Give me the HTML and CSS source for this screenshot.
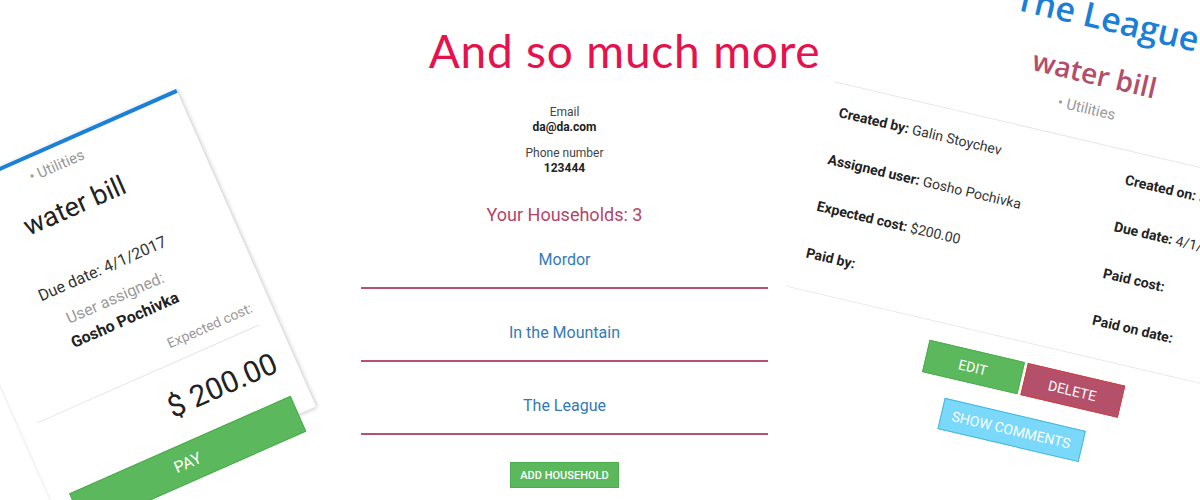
FILE: index.html
```html
<!DOCTYPE html>
<html lang="en">
<head>
<meta charset="utf-8">
<title>And so much more</title>
<link rel="stylesheet" href="styles.css">
</head>
<body>
<div class="page">
  <div class="col-left">
    <div class="bill-card">
      <div class="bc-cat">• Utilities</div>
      <div class="bc-title">water bill</div>
      <div class="bc-due">Due date: 4/1/2017</div>
      <div class="bc-label">User assigned:</div>
      <div class="bc-user">Gosho Pochivka</div>
      <div class="bc-exp">Expected cost:</div>
      <div class="bc-divider"></div>
      <div class="bc-amount">$ 200.00</div>
      <button class="bc-pay">PAY</button>
    </div>
  </div>

  <div class="col-center">
    <h1 class="headline">And so much more</h1>
    <div class="profile">
      <div class="field">
        <div class="f-label">Email</div>
        <div class="f-value">da@da.com</div>
      </div>
      <div class="field">
        <div class="f-label">Phone number</div>
        <div class="f-value">123444</div>
      </div>
    </div>
    <h2 class="hh-title">Your Households: 3</h2>
    <ul class="hh-list">
      <li class="hh-item"><a class="hh-link" href="#">Mordor</a></li>
      <li class="hh-item"><a class="hh-link" href="#">In the Mountain</a></li>
      <li class="hh-item"><a class="hh-link" href="#">The League</a></li>
    </ul>
    <button class="btn-add">ADD HOUSEHOLD</button>
  </div>

  <div class="col-right">
    <div class="bill-detail">
      <div class="bd-household">The League</div>
      <div class="bd-title">water bill</div>
      <div class="bd-cat">• Utilities</div>
      <div class="bd-rule"></div>
      <div class="bd-grid">
        <div class="bd-row"><b>Created by:</b> Galin Stoychev</div>
        <div class="bd-row"><b>Created on:</b> 3/28/2017</div>
        <div class="bd-row"><b>Assigned user:</b> Gosho Pochivka</div>
        <div class="bd-row"><b>Due date:</b> 4/1/2017</div>
        <div class="bd-row"><b>Expected cost:</b> $200.00</div>
        <div class="bd-row"><b>Paid cost:</b></div>
        <div class="bd-row"><b>Paid by:</b></div>
        <div class="bd-row"><b>Paid on date:</b></div>
      </div>
      <div class="bd-rule bd-rule-bottom"></div>
      <div class="bd-actions">
        <button class="bd-btn bd-edit">EDIT</button>
        <button class="bd-btn bd-delete">DELETE</button>
      </div>
      <div class="bd-actions bd-actions-second">
        <button class="bd-btn bd-comments">SHOW COMMENTS</button>
      </div>
    </div>
  </div>
</div>
</body>
</html>
```

FILE: styles.css
```css
html, body {
  margin: 0;
  padding: 0;
  background: #ffffff;
  overflow: hidden;
}

body {
  font-family: Roboto, "Liberation Sans", Arial, sans-serif;
  color: #333333;
}

.page {
  width: 1200px;
  height: 500px;
  overflow: hidden;
  display: grid;
  grid-template-columns: 361px 407px 1fr;
  align-items: start;
}

button {
  font-family: Roboto, "Liberation Sans", Arial, sans-serif;
  cursor: pointer;
  padding: 0;
  margin: 0;
}

/* ---------- left rotated bill card ---------- */
.col-left {
  min-width: 0;
}

.bill-card {
  box-sizing: border-box;
  width: 280px;
  height: 347px;
  margin-left: -104px;
  margin-top: 89px;
  padding: 8px 19px 0;
  background: #ffffff;
  border-top: 4px solid #1b80d8;
  box-shadow: 1px 1px 4px rgba(0, 0, 0, 0.22);
  transform-origin: 100% 0;
  transform: rotate(-23.8deg);
  display: flex;
  flex-direction: column;
}

.bc-cat {
  font-size: 15px;
  line-height: 20px;
  color: #999999;
  text-align: center;
}

.bc-title {
  margin-top: 18px;
  font-size: 27px;
  line-height: 32px;
  color: #222222;
  text-align: center;
}

.bc-due {
  margin-top: 42px;
  font-size: 16px;
  line-height: 22px;
  color: #333333;
  text-align: center;
}

.bc-label {
  margin-top: 10px;
  font-size: 16px;
  line-height: 22px;
  color: #9a9a9a;
  text-align: center;
}

.bc-user {
  margin-top: 2px;
  font-size: 16px;
  line-height: 22px;
  font-weight: 700;
  color: #222222;
  text-align: center;
}

.bc-exp {
  margin-top: 18px;
  font-size: 14px;
  line-height: 20px;
  color: #9a9a9a;
  text-align: right;
}

.bc-divider {
  margin-top: 9px;
  border-top: 1px solid #e6e6e6;
}

.bc-amount {
  margin-top: 22px;
  font-size: 30px;
  line-height: 36px;
  color: #222222;
  text-align: right;
}

.bc-pay {
  flex: none;
  margin-top: 19px;
  height: 39px;
  border: 1px solid #4cae4c;
  background: #5cb85c;
  color: #ffffff;
  font-size: 16px;
}

/* ---------- center column ---------- */
.col-center {
  display: flex;
  flex-direction: column;
  align-items: stretch;
}

.headline {
  margin: 24px -120px 0 0;
  font-family: Lato, "Open Sans", sans-serif;
  font-weight: 400;
  font-size: 46px;
  line-height: 54px;
  letter-spacing: 0.8px;
  color: #e5124d;
  text-align: center;
  white-space: nowrap;
}

.profile {
  margin-top: 27px;
  display: flex;
  flex-direction: column;
  gap: 11px;
  text-align: center;
  font-size: 12px;
  line-height: 15px;
}

.f-label {
  color: #444444;
}

.f-value {
  font-weight: 700;
  color: #222222;
}

.hh-title {
  margin: 27px 0 0;
  font-size: 18px;
  line-height: 24px;
  font-weight: 400;
  color: #b3466a;
  text-align: center;
}

.hh-list {
  list-style: none;
  margin: 6px 0 0;
  padding: 0;
  display: flex;
  flex-direction: column;
  gap: 17px;
}

.hh-item {
  padding: 16px 0;
  border-bottom: 2px solid #b8516f;
  text-align: center;
  font-size: 16px;
  line-height: 22px;
}

.hh-link {
  color: #337ab7;
  text-decoration: none;
}

.btn-add {
  align-self: center;
  margin-top: 27px;
  height: 26px;
  padding: 0 9px;
  border: 1px solid #4cae4c;
  background: #5cb85c;
  color: #ffffff;
  font-size: 11px;
  font-weight: 500;
}

/* ---------- right rotated bill details ---------- */
.col-right {
  min-width: 0;
}

.bill-detail {
  width: 504px;
  margin-left: 99px;
  margin-top: -59px;
  transform-origin: 0 0;
  transform: rotate(13.2deg);
  display: flex;
  flex-direction: column;
}

.bd-household {
  font-family: "Open Sans", sans-serif;
  font-weight: 600;
  font-size: 34px;
  line-height: 40px;
  color: #1a7fd6;
  text-align: center;
}

.bd-title {
  margin-top: 20px;
  font-family: "Open Sans", sans-serif;
  font-weight: 600;
  font-size: 28px;
  line-height: 34px;
  color: #b24e6b;
  text-align: center;
}

.bd-cat {
  margin-top: 9px;
  font-size: 15px;
  line-height: 20px;
  color: #999999;
  text-align: center;
}

.bd-rule {
  margin-top: 21px;
  border-top: 1px solid #e8e8e8;
}

.bd-grid {
  margin-top: 18px;
  padding: 0 12px;
  display: grid;
  grid-template-columns: 294px 1fr;
  row-gap: 28px;
  font-size: 14px;
  line-height: 20px;
  color: #333333;
}

.bd-row {
  white-space: nowrap;
}

.bd-row b {
  color: #222222;
}

.bd-rule-bottom {
  margin-top: 27px;
}

.bd-actions {
  margin-top: 19px;
  display: flex;
  justify-content: center;
  gap: 3px;
}

.bd-actions-second {
  margin-top: 20px;
}

.bd-btn {
  height: 33px;
  color: #ffffff;
  font-size: 14px;
}

.bd-edit {
  width: 98px;
  background: #5cb85c;
  border: 1px solid #4cae4c;
}

.bd-delete {
  width: 100px;
  background: #b5506b;
  border: 1px solid #d43f3a;
}

.bd-comments {
  width: 145px;
  height: 32px;
  background: #7ad8fb;
  border: 1px solid #46b8da;
}
```
